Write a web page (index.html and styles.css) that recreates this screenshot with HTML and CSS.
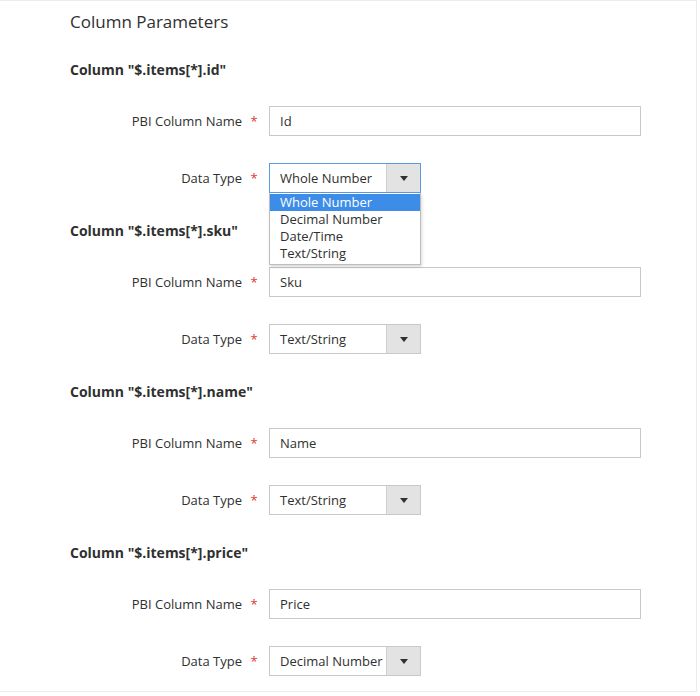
FILE: index.html
```html
<!DOCTYPE html>
<html>
<head>
<meta charset="utf-8">
<link rel="stylesheet" href="styles.css">
</head>
<body>
<div class="page">
  <h2 class="title">Column Parameters</h2>

  <section class="group">
    <h3 class="group-title">Column "$.items[*].id"</h3>
    <div class="row">
      <label class="label">PBI Column Name<span class="req">*</span></label>
      <div class="input">Id</div>
    </div>
    <div class="row">
      <label class="label">Data Type<span class="req">*</span></label>
      <div class="select-wrap">
        <div class="select focus"><span class="val">Whole Number</span><span class="btn"><span class="tri"></span></span></div>
        <ul class="options">
          <li class="opt active">Whole Number</li>
          <li class="opt">Decimal Number</li>
          <li class="opt">Date/Time</li>
          <li class="opt">Text/String</li>
        </ul>
      </div>
    </div>
  </section>

  <section class="group">
    <h3 class="group-title">Column "$.items[*].sku"</h3>
    <div class="row">
      <label class="label">PBI Column Name<span class="req">*</span></label>
      <div class="input">Sku</div>
    </div>
    <div class="row">
      <label class="label">Data Type<span class="req">*</span></label>
      <div class="select-wrap">
        <div class="select"><span class="val">Text/String</span><span class="btn"><span class="tri"></span></span></div>
      </div>
    </div>
  </section>

  <section class="group">
    <h3 class="group-title">Column "$.items[*].name"</h3>
    <div class="row">
      <label class="label">PBI Column Name<span class="req">*</span></label>
      <div class="input">Name</div>
    </div>
    <div class="row">
      <label class="label">Data Type<span class="req">*</span></label>
      <div class="select-wrap">
        <div class="select"><span class="val">Text/String</span><span class="btn"><span class="tri"></span></span></div>
      </div>
    </div>
  </section>

  <section class="group">
    <h3 class="group-title">Column "$.items[*].price"</h3>
    <div class="row">
      <label class="label">PBI Column Name<span class="req">*</span></label>
      <div class="input">Price</div>
    </div>
    <div class="row">
      <label class="label">Data Type<span class="req">*</span></label>
      <div class="select-wrap">
        <div class="select"><span class="val">Decimal Number</span><span class="btn"><span class="tri"></span></span></div>
      </div>
    </div>
  </section>
</div>
</body>
</html>
```

FILE: styles.css
```css
* { box-sizing: border-box; }
html, body { margin: 0; padding: 0; background: #fff; }
body {
  font-family: "Open Sans", "Noto Sans", "Liberation Sans", sans-serif;
  color: #303030;
}
.page {
  width: 697px;
  height: 692px;
  border-top: 1px solid #ececec;
  border-right: 1px solid #ececec;
  border-bottom: 1px solid #ececec;
  padding-top: 9px;
}
.title {
  margin: 0 0 26px 70px;
  font-size: 17px;
  font-weight: 400;
  line-height: 24px;
  color: #303030;
}
.group { margin-bottom: 28px; }
.group-title {
  margin: 0 0 26px 70px;
  font-size: 14px;
  font-weight: 700;
  line-height: 20px;
  color: #303030;
}
.row {
  display: flex;
  align-items: center;
  height: 30px;
  margin-bottom: 27px;
}
.row:last-child { margin-bottom: 0; }
.label {
  width: 263px;
  text-align: right;
  font-size: 13px;
  line-height: 20px;
  color: #303030;
}
.req {
  display: inline-block;
  width: 18px;
  text-align: center;
  margin-left: 3px;
  color: #e03a2e;
  font-size: 13px;
}
.input {
  margin-left: 6px;
  width: 372px;
  height: 30px;
  border: 1px solid #c9c9c9;
  padding: 0 10px;
  font-size: 13px;
  line-height: 28px;
  color: #303030;
}
.select-wrap {
  position: relative;
  margin-left: 6px;
}
.select {
  display: flex;
  width: 152px;
  height: 30px;
  border: 1px solid #c9c9c9;
  font-size: 13px;
  line-height: 28px;
}
.select.focus { border-color: #5a9be6; }
.val {
  flex: 1;
  padding-left: 10px;
  color: #303030;
  white-space: nowrap;
}
.btn {
  width: 34px;
  background: #e3e3e3;
  border-left: 1px solid #cfcfcf;
  display: flex;
  align-items: center;
  justify-content: center;
}
.tri {
  width: 0;
  height: 0;
  border-left: 4px solid transparent;
  border-right: 4px solid transparent;
  border-top: 5px solid #303030;
}
.options {
  position: absolute;
  left: 0;
  top: 30px;
  width: 152px;
  margin: 0;
  padding: 1px 0 2px;
  list-style: none;
  background: #fff;
  border: 1px solid #bdbdbd;
  border-top: 0;
  box-shadow: 1px 2px 3px rgba(0,0,0,0.15);
  z-index: 5;
}
.opt {
  font-size: 13px;
  line-height: 17px;
  padding-left: 10px;
  color: #303030;
}
.opt.active {
  background: #3d8ce8;
  color: #fff;
}
```
